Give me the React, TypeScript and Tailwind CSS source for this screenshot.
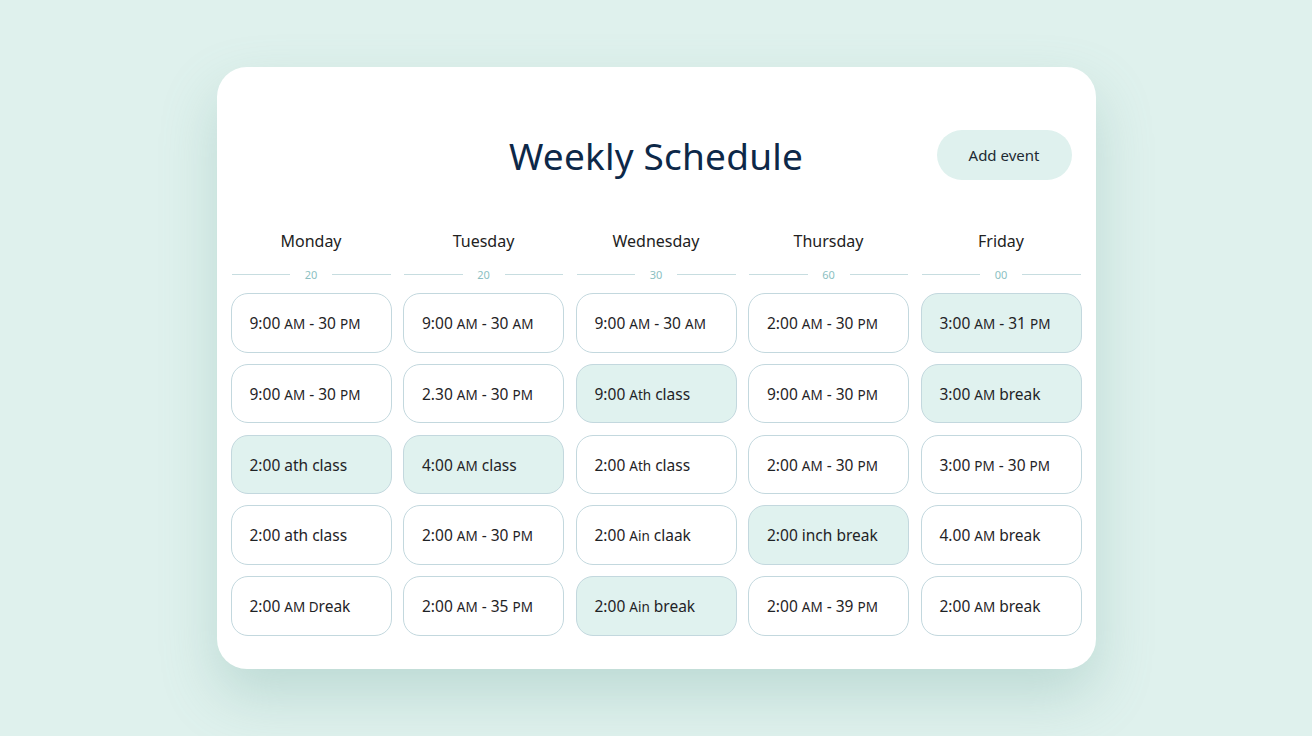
import React from "react";

type Cell = { t: string; s?: string; r?: string; hl?: boolean };

const cols: { day: string; num: string; cells: Cell[] }[] = [
  {
    day: "Monday",
    num: "20",
    cells: [
      { t: "9:00 ", s: "AM", r: " - 30 |PM" },
      { t: "9:00 ", s: "AM", r: " - 30 |PM" },
      { t: "2:00 ath class", hl: true },
      { t: "2:00 ath class" },
      { t: "2:00 ", s: "AM D", r: "reak" },
    ],
  },
  {
    day: "Tuesday",
    num: "20",
    cells: [
      { t: "9:00 ", s: "AM", r: " - 30 |AM" },
      { t: "2.30 ", s: "AM", r: " - 30 |PM" },
      { t: "4:00 ", s: "AM", r: " class", hl: true },
      { t: "2:00 ", s: "AM", r: " - 30 |PM" },
      { t: "2:00 ", s: "AM", r: " - 35 |PM" },
    ],
  },
  {
    day: "Wednesday",
    num: "30",
    cells: [
      { t: "9:00 ", s: "AM", r: " - 30 |AM" },
      { t: "9:00 ", s: "Ath", r: " class", hl: true },
      { t: "2:00 ", s: "Ath", r: " class" },
      { t: "2:00 ", s: "Ain", r: " claak" },
      { t: "2:00 ", s: "Ain", r: " break", hl: true },
    ],
  },
  {
    day: "Thursday",
    num: "60",
    cells: [
      { t: "2:00 ", s: "AM", r: " - 30 |PM" },
      { t: "9:00 ", s: "AM", r: " - 30 |PM" },
      { t: "2:00 ", s: "AM", r: " - 30 |PM" },
      { t: "2:00 inch break", hl: true },
      { t: "2:00 ", s: "AM", r: " - 39 |PM" },
    ],
  },
  {
    day: "Friday",
    num: "00",
    cells: [
      { t: "3:00 ", s: "AM", r: " - 31 |PM", hl: true },
      { t: "3:00 ", s: "AM", r: " break", hl: true },
      { t: "3:00 ", s: "PM", r: " - 30 |PM" },
      { t: "4.00 ", s: "AM", r: " break" },
      { t: "2:00 ", s: "AM", r: " break" },
    ],
  },
];

function Rest({ r }: { r?: string }) {
  if (!r) return null;
  const parts = r.split("|");
  if (parts.length === 1) return <span>{parts[0]}</span>;
  return (
    <>
      <span>{parts[0]}</span>
      <span className="text-[13.5px]">{parts[1]}</span>
    </>
  );
}

export default function App() {
  return (
    <div
      className="w-[1312px] h-[736px] bg-[#dff1ed] flex items-center justify-center overflow-hidden"
      style={{ fontFamily: '"Noto Sans", "Open Sans", sans-serif' }}
    >
      <div className="w-[879px] h-[602px] bg-white rounded-[30px] shadow-[0_26px_56px_rgba(110,165,155,0.3)] px-[14px] pt-[63px] flex flex-col">
        <div className="grid grid-cols-[1fr_auto_1fr] items-center h-[50px]">
          <div />
          <h1 className="text-[37px] leading-none text-[#0d2848] tracking-[0.2px]">
            Weekly Schedule
          </h1>
          <div className="flex justify-end pr-[10px]">
            <button className="w-[135px] h-[50px] rounded-full bg-[#dff1ee] text-[15px] text-[#1d2a33]">
              Add event
            </button>
          </div>
        </div>

        <div className="grid grid-cols-5 gap-x-[11.5px] mt-[49px]">
          {cols.map((c) => (
            <div key={c.day} className="flex flex-col">
              <div className="h-[24px] text-[16px] leading-[24px] text-center text-[#222]">
                {c.day}
              </div>
              <div className="h-[14px] mt-[14px] flex items-center gap-[10px] px-[1px]">
                <div className="flex-1 h-px bg-[#c7dde0]" />
                <span className="text-[11px] leading-none text-[#8cbfc2] w-[22px] text-center">
                  {c.num}
                </span>
                <div className="flex-1 h-px bg-[#c7dde0]" />
              </div>
              <div className="flex flex-col gap-[11.25px] mt-[12px]">
                {c.cells.map((cell, i) => (
                  <div
                    key={i}
                    className={
                      "h-[59.5px] rounded-[17px] border border-[#c3d8de] flex items-center pl-[18px] pt-[2px] text-[15.5px] text-[#1f2326] " +
                      (cell.hl ? "bg-[#e0f2ef]" : "bg-white")
                    }
                  >
                    <span className="whitespace-nowrap">
                      {cell.t}
                      {cell.s && <span className="text-[13.5px]">{cell.s}</span>}
                      <Rest r={cell.r} />
                    </span>
                  </div>
                ))}
              </div>
            </div>
          ))}
        </div>
      </div>
    </div>
  );
}
